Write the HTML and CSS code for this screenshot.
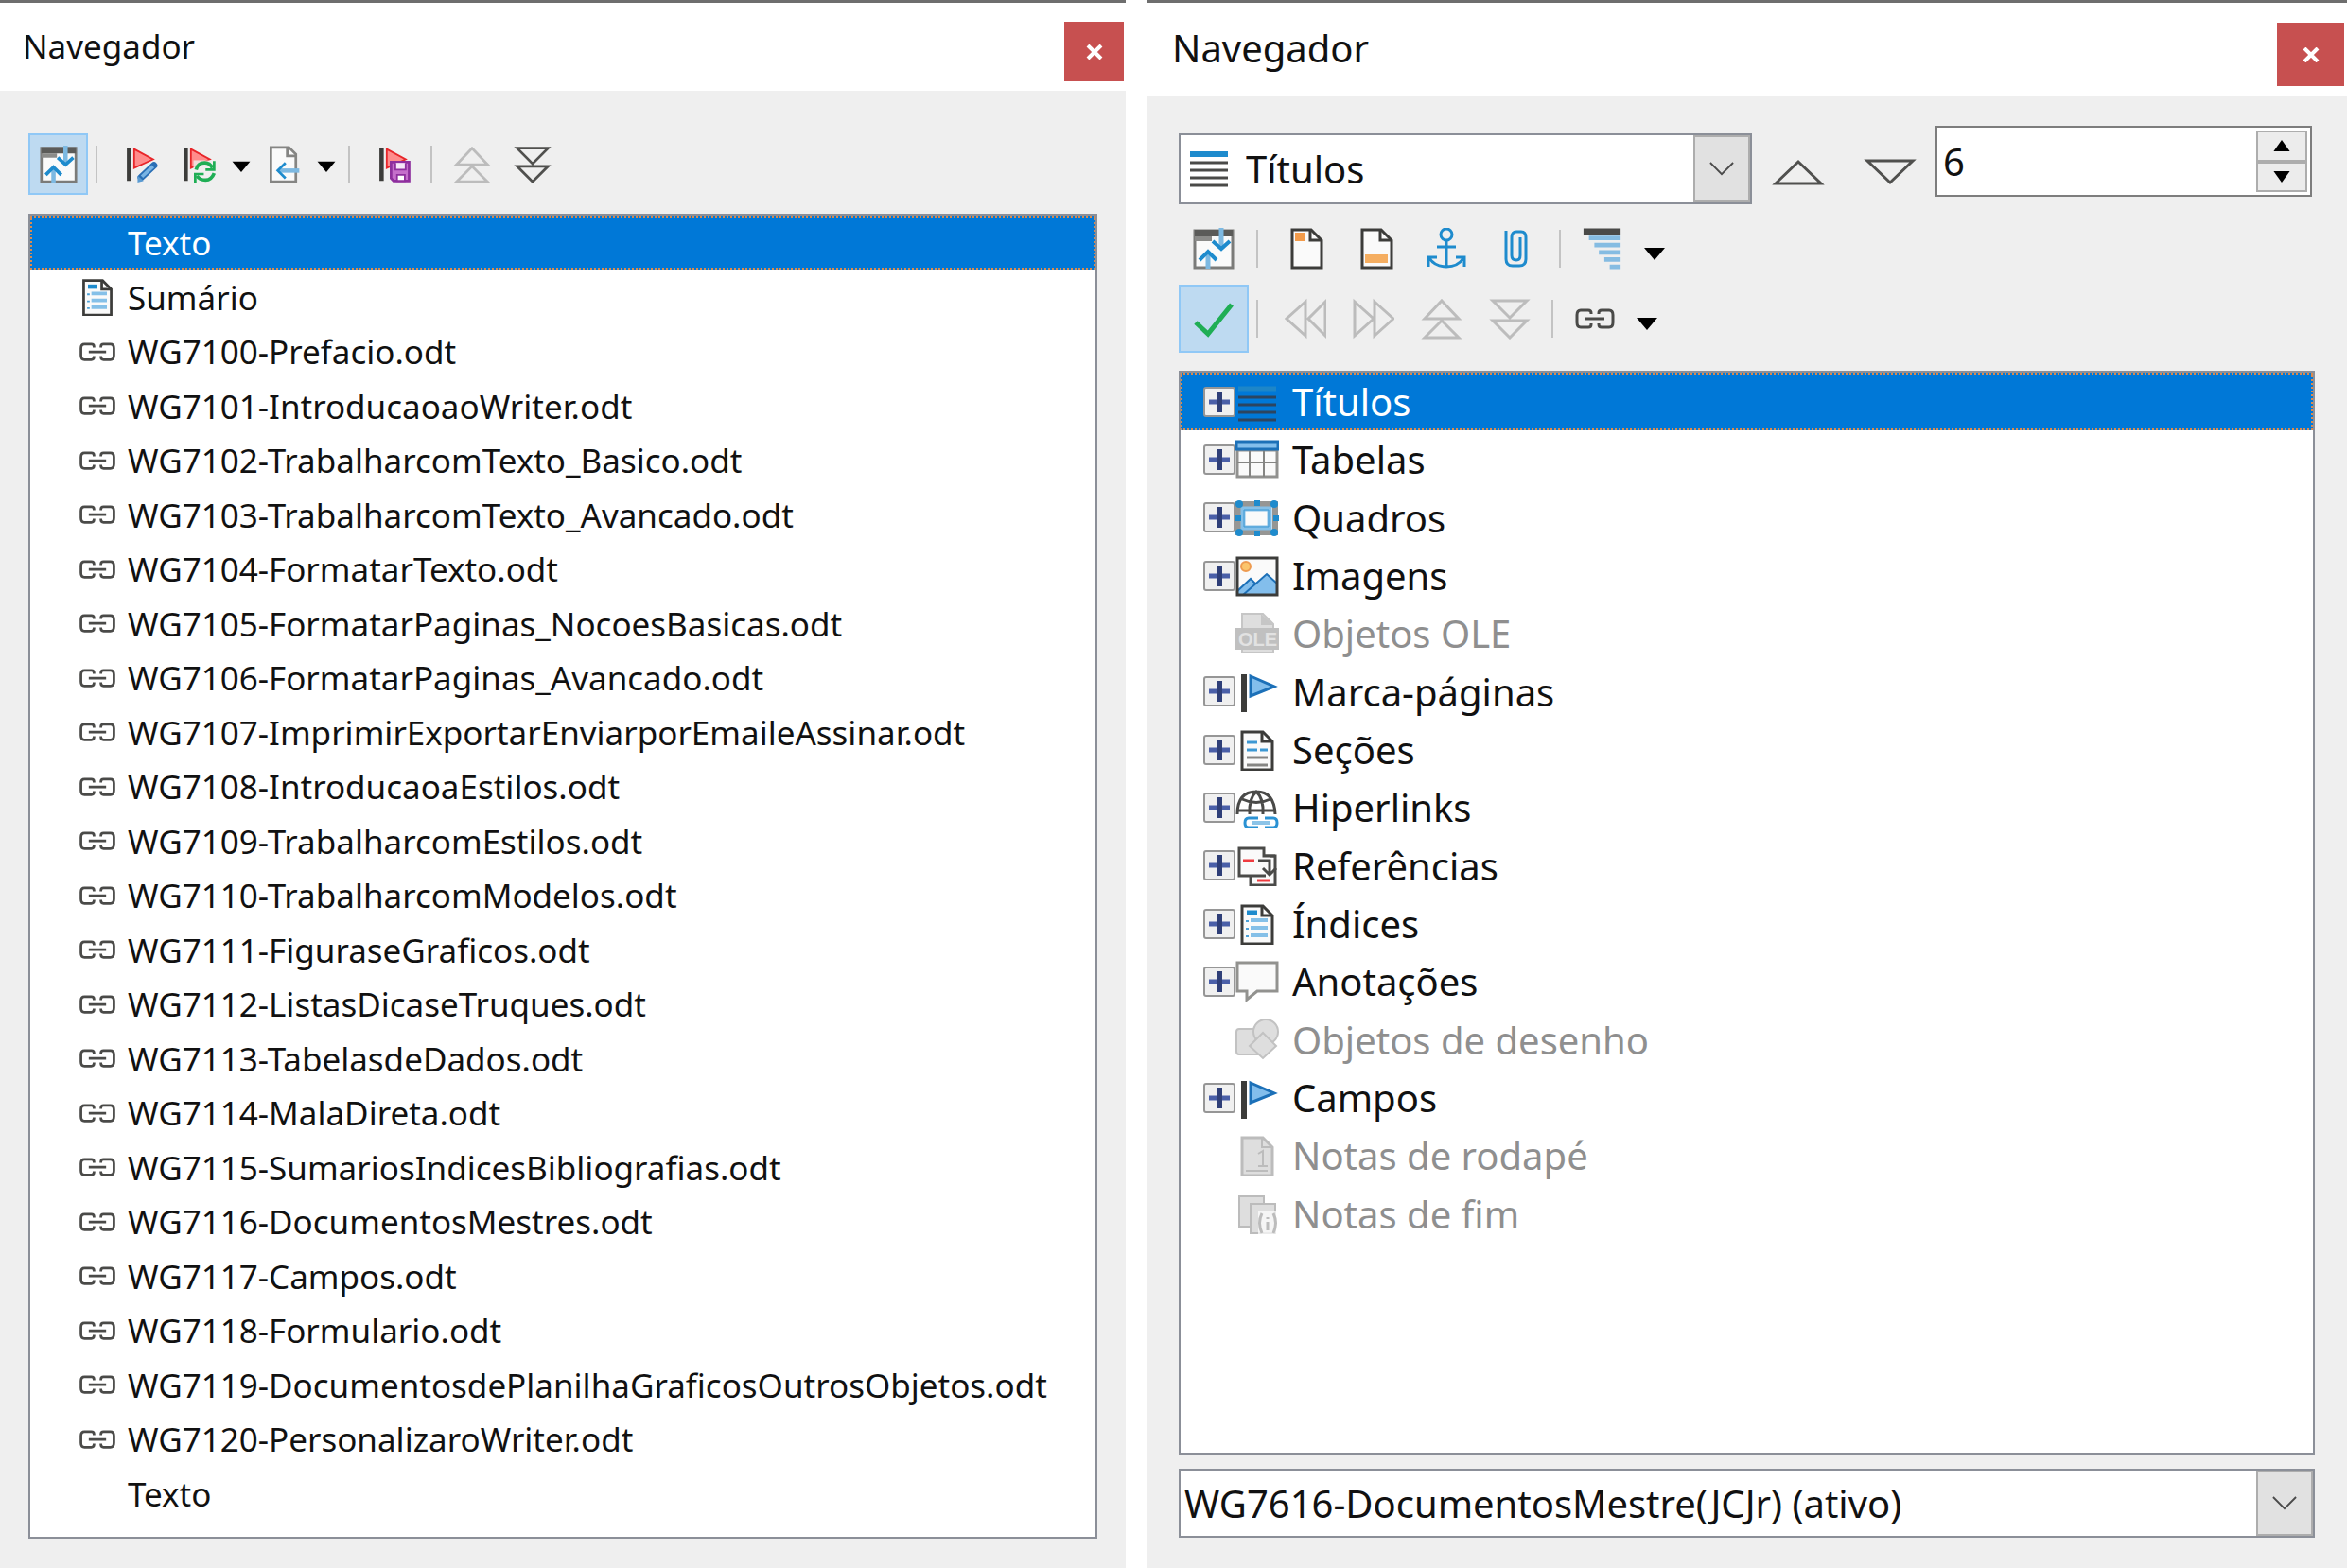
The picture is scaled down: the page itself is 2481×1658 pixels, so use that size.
FILE: index.html
```html
<!DOCTYPE html>
<html lang="pt-BR">
<head>
<meta charset="utf-8">
<title>Navegador</title>
<link rel="stylesheet" href="styles.css">
</head>
<body>
<svg class="sprite" aria-hidden="true">
  <symbol id="toggle" viewBox="0 0 44 44">
    <path d="M2 3H42V42H2Z" fill="#fafafa" stroke="#7b7b79" stroke-width="3"/>
    <path d="M2 2H42V9H2Z" fill="#5b5b59"/><path d="M2 9H20V14H2Z" fill="#8b8b89"/>
    <path d="M30 0V20M16 43V27" stroke="#7db9e2" stroke-width="5" fill="none"/>
    <path d="M21 14L30 22L39 14M7 34L16 25L25 34" stroke="#1e8bcd" stroke-width="4" fill="none"/>
  </symbol>
  <symbol id="chain" viewBox="0 0 44 24">
    <path d="M18 7V6Q18 3 15 3H7Q3 3 3 8V16Q3 21 7 21H15Q18 21 18 18V17M26 7V6Q26 3 29 3H37Q41 3 41 8V16Q41 21 37 21H29Q26 21 26 18V17M12 12H32" fill="none" stroke="#4a4a48" stroke-width="3"/>
  </symbol>
  <symbol id="toc" viewBox="0 0 46 44">
    <path d="M7 3H29L39 13V43H7Z" fill="#fafafa" stroke="#3c3c3a" stroke-width="3"/><path d="M28 3V13H39" fill="none" stroke="#3c3c3a" stroke-width="3"/>
    <path d="M12 10H23" stroke="#1e8bcd" stroke-width="5"/><path d="M16 18H34M16 26H34M16 34H34" stroke="#85c0e8" stroke-width="4"/>
    <path d="M11 19H14M11 27H14M11 35H14" stroke="#4aa0d8" stroke-width="2"/>
  </symbol>
  <symbol id="redflag" viewBox="0 0 40 44">
    <path d="M5 3V41" stroke="#3c3c3a" stroke-width="5"/><path d="M11 4L33 16L11 26Z" fill="#ff8c8c" stroke="#e8262a" stroke-width="2"/>
  </symbol>
  <symbol id="bluemark" viewBox="0 0 46 44">
    <path d="M9 4V44" stroke="#3c3c3a" stroke-width="6"/><path d="M16 6L41 17L16 27Z" fill="#83beec" stroke="#1c70b8" stroke-width="3"/>
  </symbol>
  <symbol id="drop" viewBox="0 0 22 14"><path d="M0 1H22L11 14Z" fill="#000"/></symbol>
  <symbol id="dup" viewBox="0 0 44 44"><path d="M22 3L40 22H4ZM22 24L40 42H4Z" fill="none" stroke="currentColor" stroke-width="3"/></symbol>
  <symbol id="ddown" viewBox="0 0 44 44"><path d="M4 3H40L22 21ZM4 24H40L22 42Z" fill="none" stroke="currentColor" stroke-width="3"/></symbol>
  <symbol id="plus" viewBox="0 0 34 32">
    <rect x="1" y="1" width="32" height="30" rx="2" fill="#f0f0f0" stroke="#969696" stroke-width="2"/>
    <path d="M6 16H28" stroke="#4a5fa8" stroke-width="5"/><path d="M17 5V27" stroke="#2f3f78" stroke-width="6"/>
  </symbol>
  <symbol id="chev" viewBox="0 0 28 16"><path d="M1 1L14 14L27 1" fill="none" stroke="#4a4a4a" stroke-width="2"/></symbol>
</svg>

<main class="desk">
  <section class="panel panel-master" aria-label="Navegador do documento mestre">
    <header class="title"><h1>Navegador</h1><button class="close" aria-label="Fechar"><svg viewBox="0 0 18 16"><path d="M2 1L16 15M16 1L2 15" stroke="#fff" stroke-width="4"/></svg></button></header>
    <div class="content">
      <div class="tools tools-master" role="toolbar" aria-label="Ferramentas">
        <button class="tool active" aria-label="Alternar exibição" aria-pressed="true"><svg class="ic"><use href="#toggle"/></svg></button>
        <span class="sep"></span>
        <button class="tool" aria-label="Editar"><svg class="ic" viewBox="0 0 40 44"><use href="#redflag" width="40" height="44"/><path d="M34 23L19 37" stroke="#2a6fb5" stroke-width="8" stroke-linecap="round"/><path d="M33 24L20 36" stroke="#79b4e4" stroke-width="4"/><path d="M15 43V35L22 41Z" fill="#5a9bd2"/></svg></button>
        <button class="tool" aria-label="Atualizar"><svg class="ic" viewBox="0 0 40 44"><use href="#redflag" width="40" height="44"/><path d="M14 17H40V44H14Z" fill="#efefef" opacity=".8"/><path d="M17 28Q19 20 27 20Q33 20 36 26M38 32Q35 40 28 40Q21 40 18 35" fill="none" stroke="#1fae55" stroke-width="4"/><path d="M38 18V28H28M16 43V33H26" fill="none" stroke="#1fae55" stroke-width="3"/></svg></button>
        <button class="arrow" aria-label="Opções de atualizar"><svg><use href="#drop"/></svg></button>
        <button class="tool" aria-label="Inserir"><svg class="ic" viewBox="0 0 40 44"><path d="M5 2H26L34 10V42H5Z" fill="#fafafa" stroke="#858583" stroke-width="3"/><path d="M24 2V12H34" fill="none" stroke="#858583" stroke-width="3"/><path d="M14 29H38" stroke="#7db9e2" stroke-width="5"/><path d="M22 20L13 29L22 38" fill="none" stroke="#1e8bcd" stroke-width="3"/></svg></button>
        <button class="arrow" aria-label="Opções de inserir"><svg><use href="#drop"/></svg></button>
        <span class="sep"></span>
        <button class="tool" aria-label="Salvar conteúdo também"><svg class="ic" viewBox="0 0 40 44"><use href="#redflag" width="40" height="44"/><path d="M16 19H37V41H19L16 38Z" fill="#c56fcb" stroke="#8e2f9e" stroke-width="3"/><path d="M21 20V28H33V20" fill="#f6e6f8" stroke="#8e2f9e" stroke-width="2"/><path d="M23 41V34H32V41Z" fill="#fff" stroke="#8e2f9e" stroke-width="2"/></svg></button>
        <span class="sep sep-tight"></span>
        <button class="tool wide" aria-label="Mover para cima" disabled><svg class="ic"><use href="#dup"/></svg></button>
        <button class="tool wide" aria-label="Mover para baixo"><svg class="ic"><use href="#ddown"/></svg></button>
      </div>
      <ul class="list files" aria-label="Arquivos do documento mestre">
        <li class="selected"><span class="mark"></span>Texto</li>
        <li><span class="mark"><svg class="doc"><use href="#toc"/></svg></span>Sumário</li>
        <li><span class="mark"><svg><use href="#chain"/></svg></span>WG7100-Prefacio.odt</li>
        <li><span class="mark"><svg><use href="#chain"/></svg></span>WG7101-IntroducaoaoWriter.odt</li>
        <li><span class="mark"><svg><use href="#chain"/></svg></span>WG7102-TrabalharcomTexto_Basico.odt</li>
        <li><span class="mark"><svg><use href="#chain"/></svg></span>WG7103-TrabalharcomTexto_Avancado.odt</li>
        <li><span class="mark"><svg><use href="#chain"/></svg></span>WG7104-FormatarTexto.odt</li>
        <li><span class="mark"><svg><use href="#chain"/></svg></span>WG7105-FormatarPaginas_NocoesBasicas.odt</li>
        <li><span class="mark"><svg><use href="#chain"/></svg></span>WG7106-FormatarPaginas_Avancado.odt</li>
        <li><span class="mark"><svg><use href="#chain"/></svg></span>WG7107-ImprimirExportarEnviarporEmaileAssinar.odt</li>
        <li><span class="mark"><svg><use href="#chain"/></svg></span>WG7108-IntroducaoaEstilos.odt</li>
        <li><span class="mark"><svg><use href="#chain"/></svg></span>WG7109-TrabalharcomEstilos.odt</li>
        <li><span class="mark"><svg><use href="#chain"/></svg></span>WG7110-TrabalharcomModelos.odt</li>
        <li><span class="mark"><svg><use href="#chain"/></svg></span>WG7111-FiguraseGraficos.odt</li>
        <li><span class="mark"><svg><use href="#chain"/></svg></span>WG7112-ListasDicaseTruques.odt</li>
        <li><span class="mark"><svg><use href="#chain"/></svg></span>WG7113-TabelasdeDados.odt</li>
        <li><span class="mark"><svg><use href="#chain"/></svg></span>WG7114-MalaDireta.odt</li>
        <li><span class="mark"><svg><use href="#chain"/></svg></span>WG7115-SumariosIndicesBibliografias.odt</li>
        <li><span class="mark"><svg><use href="#chain"/></svg></span>WG7116-DocumentosMestres.odt</li>
        <li><span class="mark"><svg><use href="#chain"/></svg></span>WG7117-Campos.odt</li>
        <li><span class="mark"><svg><use href="#chain"/></svg></span>WG7118-Formulario.odt</li>
        <li><span class="mark"><svg><use href="#chain"/></svg></span>WG7119-DocumentosdePlanilhaGraficosOutrosObjetos.odt</li>
        <li><span class="mark"><svg><use href="#chain"/></svg></span>WG7120-PersonalizaroWriter.odt</li>
        <li><span class="mark"></span>Texto</li>
      </ul>
    </div>
  </section>

  <section class="panel panel-doc" aria-label="Navegador do documento">
    <header class="title"><h1>Navegador</h1><button class="close" aria-label="Fechar"><svg viewBox="0 0 18 16"><path d="M2 1L16 15M16 1L2 15" stroke="#fff" stroke-width="4"/></svg></button></header>
    <div class="content">
      <div class="goto">
        <label class="combo combo-type">
          <svg class="combo-icon" viewBox="0 0 40 40"><path d="M0 4H40" stroke="#1e8bcd" stroke-width="6"/><path d="M0 13H40M0 21H40M0 29H40M0 37H40" stroke="#4a4a48" stroke-width="3"/></svg>
          <select aria-label="Navegar por"><option>Títulos</option></select>
          <span class="chev"><svg><use href="#chev"/></svg></span>
        </label>
        <button class="step" aria-label="Anterior"><svg viewBox="0 0 56 28"><path d="M4 26L28 3L52 26Z" fill="none" stroke="#50504e" stroke-width="3"/></svg></button>
        <button class="step" aria-label="Próximo"><svg viewBox="0 0 56 28"><path d="M4 2H52L28 25Z" fill="none" stroke="#50504e" stroke-width="3"/></svg></button>
        <div class="spin">
          <input type="text" value="6" inputmode="numeric" aria-label="Página">
          <div class="spin-buttons">
            <button aria-label="Aumentar"><svg viewBox="0 0 20 14"><path d="M0 14L10 0L20 14Z"/></svg></button>
            <button aria-label="Diminuir"><svg viewBox="0 0 20 14"><path d="M0 0L10 14L20 0Z"/></svg></button>
          </div>
        </div>
      </div>
      <div class="tools tools-view" role="toolbar" aria-label="Exibição">
        <button class="tool" aria-label="Alternar exibição"><svg class="ic"><use href="#toggle"/></svg></button>
        <span class="sep"></span>
        <button class="tool" aria-label="Cabeçalho"><svg class="ic" viewBox="0 0 44 44"><path d="M7 2H27L38 13V42H7Z" fill="#fafafa" stroke="#3c3c3a" stroke-width="3"/><path d="M26 2V13H38" fill="none" stroke="#3c3c3a" stroke-width="3"/><rect x="10" y="5" width="11" height="9" fill="#f29b4b"/></svg></button>
        <button class="tool" aria-label="Rodapé"><svg class="ic" viewBox="0 0 44 44"><path d="M7 2H27L38 13V42H7Z" fill="#fafafa" stroke="#3c3c3a" stroke-width="3"/><path d="M26 2V13H38" fill="none" stroke="#3c3c3a" stroke-width="3"/><rect x="10" y="28" width="24" height="9" fill="#f5ae61"/></svg></button>
        <button class="tool" aria-label="Âncora"><svg class="ic" viewBox="0 0 44 44"><g fill="none" stroke="#1e8bcd" stroke-width="3"><circle cx="22" cy="7" r="6"/><path d="M22 13V42M12 20H32M3 41V31H12M41 41V31H32M4 32Q10 41 22 41Q34 41 40 32"/></g></svg></button>
        <button class="tool" aria-label="Definir lembrete"><svg class="ic" viewBox="0 0 44 44"><path d="M11 3V33Q11 40 18 40H25Q32 40 32 33V10Q32 4 27 4H22Q17 4 17 10V29Q17 34 22 34Q26 34 26 29V10" fill="none" stroke="#1e8bcd" stroke-width="3"/></svg></button>
        <span class="sep"></span>
        <button class="tool last" aria-label="Níveis de título mostrados"><svg class="ic" viewBox="0 0 44 46"><path d="M1 4H42" stroke="#4a4a48" stroke-width="7"/><path d="M7 11H42M13 19H42M18 27H42M24 35H42M30 43H42" stroke="#85bce2" stroke-width="5"/></svg></button>
        <button class="arrow" aria-label="Opções de níveis"><svg><use href="#drop"/></svg></button>
      </div>
      <div class="tools tools-order" role="toolbar" aria-label="Ordem">
        <button class="tool active" aria-label="Caixa de lista" aria-pressed="true"><svg class="ic" viewBox="0 0 44 44"><path d="M3 26L16 38L41 7" fill="none" stroke="#1fae55" stroke-width="5"/></svg></button>
        <span class="sep"></span>
        <button class="tool" aria-label="Promover nível" disabled><svg class="ic" viewBox="0 0 44 44"><path d="M22 4V40L2 22ZM43 4V40L25 22Z" fill="none" stroke="currentColor" stroke-width="3"/></svg></button>
        <button class="tool" aria-label="Rebaixar nível" disabled><svg class="ic" viewBox="0 0 44 44"><path d="M2 4V40L22 22ZM23 4V40L43 22Z" fill="none" stroke="currentColor" stroke-width="3"/></svg></button>
        <button class="tool" aria-label="Promover capítulo" disabled><svg class="ic"><use href="#dup"/></svg></button>
        <button class="tool" aria-label="Rebaixar capítulo" disabled><svg class="ic"><use href="#ddown"/></svg></button>
        <span class="sep"></span>
        <button class="tool last" aria-label="Modo de arrastar"><svg class="ic"><use href="#chain"/></svg></button>
        <button class="arrow" aria-label="Opções de arrastar"><svg><use href="#drop"/></svg></button>
      </div>
      <ul class="list tree" aria-label="Conteúdo do documento">
        <li class="selected"><button class="expand" aria-label="Expandir Títulos"><svg><use href="#plus"/></svg></button><svg class="kind" viewBox="0 0 46 44"><path d="M3 8H43" stroke="#1d86c8" stroke-width="5"/><path d="M3 17H43M3 25H43M3 33H43M3 41H43" stroke="#2c4560" stroke-width="3"/></svg>Títulos</li>
        <li><button class="expand" aria-label="Expandir Tabelas"><svg><use href="#plus"/></svg></button><svg class="kind" viewBox="0 0 46 44"><path d="M2 12H44V40H2Z" fill="#fafafa" stroke="#91918f" stroke-width="3"/><path d="M15 12V40M30 12V40M2 25H44" stroke="#858583" stroke-width="2"/><path d="M1 3H45V11H1Z" fill="#83beec" stroke="#1c70b8" stroke-width="3"/></svg>Tabelas</li>
        <li><button class="expand" aria-label="Expandir Quadros"><svg><use href="#plus"/></svg></button><svg class="kind" viewBox="0 0 46 44"><path d="M3 8H42V38H3Z" fill="#fff" stroke="#969694" stroke-width="6"/><path d="M8 13H36V33H8Z" fill="#fafafa" stroke="#85c0e8" stroke-width="5"/><path d="M9 14H35V32H9Z" fill="none" stroke="#3d98d3" stroke-width="1"/><g fill="#1e8bcd"><circle cx="4" cy="8" r="4"/><circle cx="41" cy="8" r="4"/><circle cx="4" cy="38" r="4"/><circle cx="41" cy="38" r="4"/><path d="M20 4H26V10H20ZM20 36H26V42H20ZM0 20H6V26H0ZM40 20H46V26H40Z"/></g></svg>Quadros</li>
        <li><button class="expand" aria-label="Expandir Imagens"><svg><use href="#plus"/></svg></button><svg class="kind" viewBox="0 0 46 44"><path d="M2 3H44V42H2Z" fill="#fafafa"/><path d="M2 42V37L16 25L21 30L33 20L44 30V42Z" fill="#83beec"/><path d="M2 38L16 25L21 30M8 42L33 20L44 30" fill="none" stroke="#1c70b8" stroke-width="2"/><circle cx="11" cy="12" r="5" fill="#fbc56d" stroke="#ee9b50" stroke-width="2"/><path d="M2 3H44V42H2Z" fill="none" stroke="#3c3c3a" stroke-width="3"/></svg>Imagens</li>
        <li class="off"><span class="expand"></span><svg class="kind" viewBox="0 0 46 44"><path d="M7 16V1H29L40 12V42H7Z" fill="#dedede" stroke="#c6c6c6" stroke-width="2"/><path d="M27 1V13H40Z" fill="#c6c6c6"/><path d="M0 16H46V39H0Z" fill="#c0c0c0"/><text x="3" y="35" class="glyph">OLE</text></svg>Objetos OLE</li>
        <li><button class="expand" aria-label="Expandir Marca-páginas"><svg><use href="#plus"/></svg></button><svg class="kind"><use href="#bluemark"/></svg>Marca-páginas</li>
        <li><button class="expand" aria-label="Expandir Seções"><svg><use href="#plus"/></svg></button><svg class="kind" viewBox="0 0 46 44"><path d="M7 3H29L39 13V43H7Z" fill="#fafafa" stroke="#3c3c3a" stroke-width="3"/><path d="M28 3V13H39" fill="none" stroke="#3c3c3a" stroke-width="3"/><path d="M12 14H23M12 22H23M26 22H34" stroke="#3d98d3" stroke-width="3"/><path d="M12 30H34M12 38H34" stroke="#858583" stroke-width="3"/></svg>Seções</li>
        <li><button class="expand" aria-label="Expandir Hiperlinks"><svg><use href="#plus"/></svg></button><svg class="kind" viewBox="0 0 46 44"><path d="M2 29Q2 5 22 5Q41 5 42 29M2 25H42M7 13Q22 20 37 13M15 29Q14 12 22 5Q30 12 29 29" fill="none" stroke="#4a4a48" stroke-width="3"/><path d="M24 33H14Q10 33 10 38Q10 43 14 43H24M31 33H40Q44 33 44 38Q44 43 40 43H31" fill="none" stroke="#2b92d3" stroke-width="3"/><path d="M17 38H37" stroke="#8cc4e8" stroke-width="4"/></svg>Hiperlinks</li>
        <li><button class="expand" aria-label="Expandir Referências"><svg><use href="#plus"/></svg></button><svg class="kind" viewBox="0 0 46 44"><path d="M16 33V43H42V12H30" fill="#fafafa" stroke="#4a4a48" stroke-width="3"/><path d="M4 4H30V12H36V33H4Z" fill="#fafafa"/><path d="M32 33H4V4H30V12H42" fill="none" stroke="#4a4a48" stroke-width="3"/><path d="M24 17H36V32M29 25L36 32L43 25" fill="none" stroke="#4a4a48" stroke-width="3"/><path d="M8 17H20M23 38H37" stroke="#ef3b3f" stroke-width="3"/></svg>Referências</li>
        <li><button class="expand" aria-label="Expandir Índices"><svg><use href="#plus"/></svg></button><svg class="kind"><use href="#toc"/></svg>Índices</li>
        <li><button class="expand" aria-label="Expandir Anotações"><svg><use href="#plus"/></svg></button><svg class="kind" viewBox="0 0 46 44"><path d="M2 2H44V32H23L12 41V32H2Z" fill="#fafafa" stroke="#92928f" stroke-width="3"/></svg>Anotações</li>
        <li class="off"><span class="expand"></span><svg class="kind" viewBox="0 0 46 44"><g fill="#dedede" stroke="#c2c2c2" stroke-width="2"><rect x="1" y="11" width="26" height="27" rx="3"/><circle cx="32" cy="14" r="13"/><path d="M29 15L43 29L29 42L15 29Z"/></g></svg>Objetos de desenho</li>
        <li><button class="expand" aria-label="Expandir Campos"><svg><use href="#plus"/></svg></button><svg class="kind"><use href="#bluemark"/></svg>Campos</li>
        <li class="off"><span class="expand"></span><svg class="kind" viewBox="0 0 46 44"><path d="M7 3H29L39 13V43H7Z" fill="#dedede" stroke="#bcbcbc" stroke-width="3"/><path d="M28 3V13H39M24 20L29 17V32M24 33H34M11 38H34" fill="none" stroke="#bcbcbc" stroke-width="2"/></svg>Notas de rodapé</li>
        <li class="off"><span class="expand"></span><svg class="kind" viewBox="0 0 46 44"><path d="M4 4H30V36H4Z" fill="#dedede" stroke="#bcbcbc" stroke-width="2"/><path d="M16 12H42V43H16Z" fill="#dedede" stroke="#bcbcbc" stroke-width="2"/><path d="M24 20H46V44H24Z" fill="#fff" opacity=".7"/><path d="M28 22Q23 32 28 43M34 31V40M34 26V28M40 22Q45 32 40 43" fill="none" stroke="#bcbcbc" stroke-width="3"/></svg>Notas de fim</li>
      </ul>
      <label class="combo combo-file">
        <select aria-label="Documento"><option>WG7616-DocumentosMestre(JCJr) (ativo)</option></select>
        <span class="chev"><svg><use href="#chev"/></svg></span>
      </label>
    </div>
  </section>
</main>
</body>
</html>
```
FILE: styles.css
```css
* { box-sizing: border-box; }
body { margin: 0; background: #fff; color: #111; font-family: "Noto Sans", sans-serif; }
svg { display: block; }
.sprite { position: absolute; width: 0; height: 0; }
button { margin: 0; padding: 0; border: 0; background: none; color: #50504e; }
button:disabled { color: #bcbcbc; }

.desk { display: grid; grid-template-columns: 1190fr 1269fr; gap: 22px; min-height: 100vh; }
.panel { display: flex; flex-direction: column; min-width: 0; background: #efefef; }
.panel-master { font-size: 35px; }
.panel-doc { font-size: 40px; }

.title { display: flex; justify-content: space-between; background: #fff; border-top: 3px solid #6e6e6e; }
.title h1 { margin: 0; font-size: inherit; font-weight: 400; }
.close { display: flex; align-items: center; justify-content: center; background: #c75050; }
.close svg { width: 18px; height: 16px; }
.panel-master .title { height: 96px; padding: 20px 2px 0 24px; }
.panel-master h1 { line-height: 52px; }
.panel-master .close { width: 63px; height: 63px; }
.panel-doc .title { height: 101px; padding: 21px 3px 0 27px; }
.panel-doc h1 { line-height: 54px; }
.panel-doc .close { width: 71px; height: 67px; }

.content { display: flex; flex-direction: column; flex: 1; }
.panel-master .content { padding: 45px 30px 31px; }
.panel-doc .content { padding: 32px 34px 32px; }

.tools { display: flex; align-items: center; }
.tool { display: flex; align-items: center; justify-content: center; height: 100%; }
.ic { width: 44px; height: 44px; }
.active { background: #bedaf1; border: 2px solid #90c8f6; }
.arrow { display: flex; align-items: center; justify-content: center; }
.arrow svg { width: 22px; height: 14px; }
.sep { height: 40px; border-left: 2px solid #c3c3c3; margin-left: 8px; }

.tools-master { height: 65px; margin-bottom: 20px; }
.tools-master .tool { width: 60px; }
.tools-master .active { width: 63px; }
.tools-master .wide { width: 64px; }
.tools-master .ic { width: 40px; height: 40px; }
.tools-master .arrow { width: 30px; }
.tools-master .arrow svg { width: 20px; height: 12px; margin-top: 4px; }
.tools-master .sep { width: 19px; }
.tools-master .sep-tight { width: 12px; }

.tools-view { height: 74px; margin-top: 10px; }
.tools-view .tool { width: 74px; }
.tools-order { height: 72px; margin: 1px 0 19px; }
.tools-order .tool { width: 72px; }
.tools-order .active { width: 74px; }
.tools-view .sep, .tools-order .sep { width: 16px; }
.tools-view .last, .tools-order .last { width: 60px; }
.panel-doc .arrow { width: 50px; }
.panel-doc .arrow svg { margin-top: 10px; }

.list { flex: 1; margin: 0; padding: 0; list-style: none; background: #fff; border: 2px solid #8b8f98; }
.list li { display: flex; align-items: center; white-space: nowrap; }
.selected { background: #0078d7; color: #fff; outline: 2px dotted #dd8a4c; outline-offset: -2px; }
.off { color: #8f8f8f; }
.files li { height: 57px; padding-left: 50px; }
.files li:nth-child(even) { height: 58px; }
.mark { width: 53px; }
.mark svg { width: 42px; height: 22px; }
.mark .doc { width: 42px; height: 40px; }

.tree li { height: 61px; padding-left: 24px; }
.tree li:nth-child(3n) { height: 62px; }
.expand { width: 34px; height: 32px; flex: none; }
.expand svg { width: 34px; height: 32px; }
.kind { width: 46px; height: 44px; margin-right: 14px; flex: none; }
.glyph { font: 700 20px "Liberation Sans", sans-serif; fill: #e2e2e2; }

.goto { display: flex; align-items: flex-start; }
.combo { display: grid; align-items: stretch; background: #fff; border: 2px solid #8b8f98; }
.combo > * { grid-row: 1; grid-column: 1; }
.combo select { appearance: none; width: 100%; border: 0; background: none; color: inherit; font: inherit; }
.combo-icon { width: 40px; height: 40px; margin-left: 10px; align-self: center; }
.chev { display: flex; align-items: center; justify-content: center; justify-self: end; width: 60px; background: #e1e1e1; border: 2px solid #adadad; pointer-events: none; }
.chev svg { width: 26px; height: 15px; }
.combo-type { flex: 1; height: 75px; margin-top: 8px; }
.combo-type select { padding: 0 0 0 69px; }
.combo-file { height: 73px; margin-top: 15px; }
.combo-file select { padding: 0 0 0 4px; }

.step { display: flex; justify-content: center; width: 97px; padding-top: 35px; }
.step svg { width: 56px; height: 28px; }
.spin { display: flex; width: 398px; height: 75px; padding: 3px; background: #fff; border: 2px solid #7d7d7d; margin-right: 3px; }
.spin input { flex: 1; min-width: 0; padding: 0 0 0 3px; border: 0; background: none; color: inherit; font: inherit; outline: 0; }
.spin-buttons { display: grid; grid-template-rows: 1fr 1fr; width: 54px; }
.spin-buttons button { display: flex; align-items: center; justify-content: center; background: #ececec; border: 2px solid #adadad; }
.spin-buttons svg { width: 20px; height: 12px; }
.spin-buttons path { fill: #000; }
```
